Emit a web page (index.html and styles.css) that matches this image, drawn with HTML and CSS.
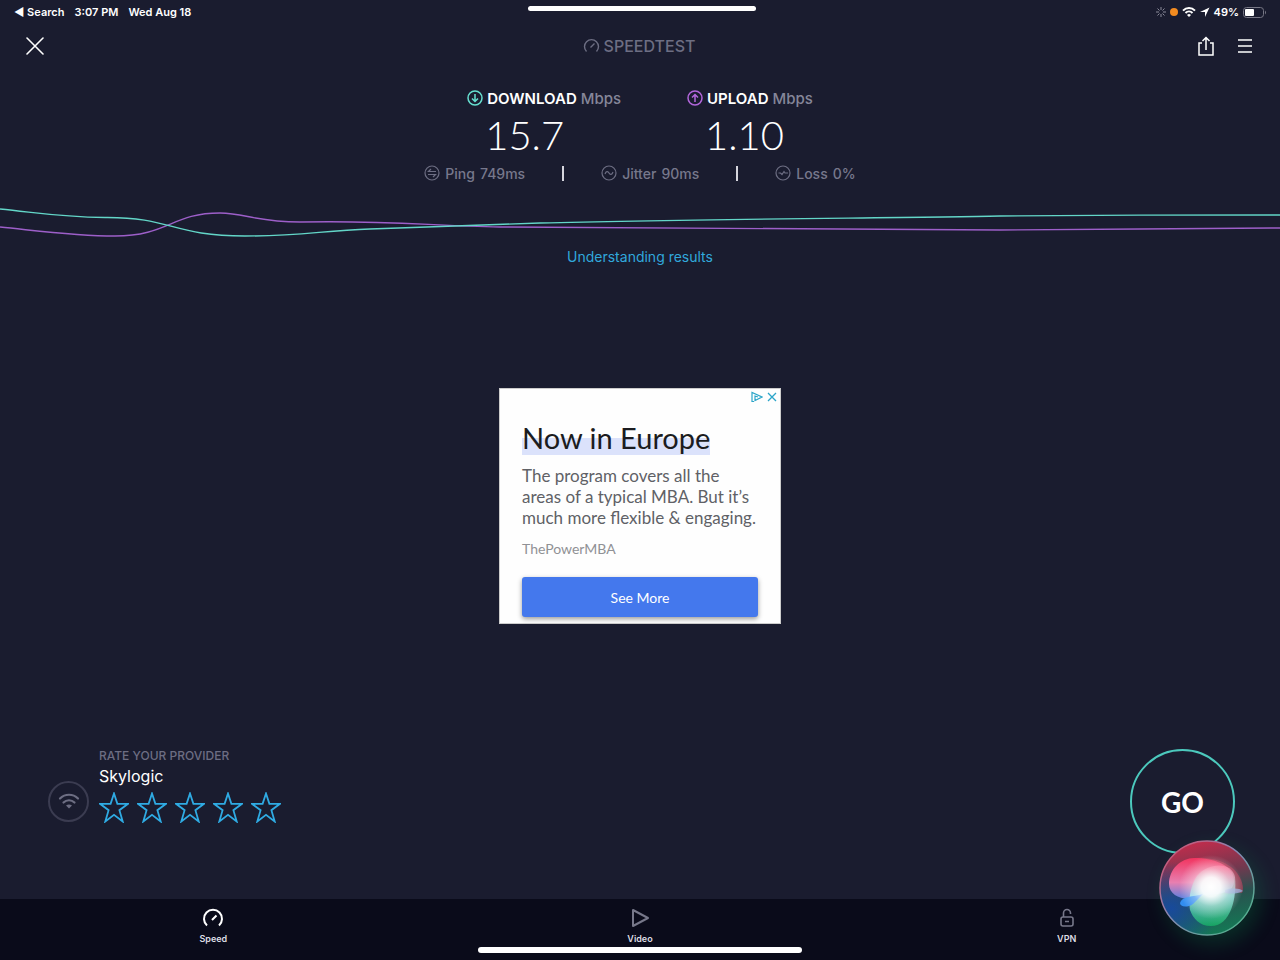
FILE: index.html
```html
<!DOCTYPE html>
<html lang="en">
<head>
    <meta charset="UTF-8">
    <meta name="viewport" content="width=device-width, initial-scale=1.0">
    <title>Speedtest</title>
    <link rel="stylesheet" href="styles.css">
</head>
<body>

    <div class="status-bar">
        <div class="status-left">
            <a href="#">◀ Search</a>
            <span>3:07 PM</span>
            <span>Wed Aug 18</span>
        </div>
        <div class="status-right">
            <svg width="10" height="10" viewBox="0 0 10 10" stroke="#8a8a9a" stroke-width="1">
                <path d="M5 0v3M5 7v3M0 5h3M7 5h3M1.5 1.5l2 2M6.5 6.5l2 2M8.500 1.500l-2 2M3.500 6.500l-2 2"/>
            </svg>
            <span class="mic-dot"></span>
            <svg width="14" height="10" viewBox="0 0 14 10" fill="none" stroke="#fff" stroke-width="2">
                <path d="M1 3.600a8.500 8.500 0 0 1 12 0M3.500 6a5 5 0 0 1 7 0"/>
                <path d="M7 10L5 8a3 3 0 0 1 4 0z" fill="#fff" stroke="none"/>
            </svg>
            <svg width="10" height="10" viewBox="0 0 10 10" fill="#fff">
                <path d="M9.500 .5L0 5h5v5z"/>
            </svg>
            <span class="percent">49%</span>
            <svg width="23" height="11" viewBox="0 0 23 11">
                <rect x=".5" y=".5" width="20" height="10" rx="3" fill="none" stroke="#777785"/>
                <rect x="2" y="2" width="9" height="7" rx="1" fill="#fff"/>
                <path d="M22 3.500q2 2 0 4z" fill="#777785"/>
            </svg>
        </div>
        <div class="grabber"></div>
    </div>

    <header class="header">
        <button class="icon-button" aria-label="Close">
            <svg width="18" height="18" viewBox="0 0 18 18" stroke="#fff" stroke-width="1.600" stroke-linecap="round">
                <path d="M1 1l16 16M17 1L1 17"/>
            </svg>
        </button>
        <div class="logo">
            <svg width="17" height="16" viewBox="0 0 17 16" fill="none" stroke="#6d6e83" stroke-width="1.400">
                <path d="M3.500 13.500a7 7 0 1 1 10 0M7.500 9.500l4-4"/>
            </svg>
            SPEEDTEST
        </div>
        <div class="header-actions">
            <button class="icon-button" aria-label="Share">
                <svg width="16" height="20" viewBox="0 0 16 20" fill="none" stroke="#fff" stroke-width="1.500">
                    <path d="M4 7H1v12h14V7h-3M8 14V1.500M4.500 5L8 1.500 11.500 5"/>
                </svg>
            </button>
            <button class="icon-button" aria-label="Menu">
                <svg width="14" height="14" viewBox="0 0 14 14" stroke="#fff" stroke-width="1.600">
                    <path d="M0 1h14M0 7h14M0 13h14"/>
                </svg>
            </button>
        </div>
    </header>

    <main class="main">
        <div class="results">
            <div class="result">
                <div class="result-label">
                    <svg width="16" height="16" viewBox="0 0 16 16" fill="none" stroke="#66dfd0" stroke-width="1.500">
                        <circle cx="8" cy="8" r="7"/>
                        <path d="M8 4v7.500M5 8.500l3 3 3-3"/>
                    </svg>
                    <b>DOWNLOAD</b> Mbps
                </div>
                <div class="result-value">15.7</div>
            </div>
            <div class="result">
                <div class="result-label">
                    <svg width="16" height="16" viewBox="0 0 16 16" fill="none" stroke="#b266db" stroke-width="1.500">
                        <circle cx="8" cy="8" r="7"/>
                        <path d="M8 12V4.500M5 7.500l3-3 3 3"/>
                    </svg>
                    <b>UPLOAD</b> Mbps
                </div>
                <div class="result-value">1.10</div>
            </div>
        </div>

        <div class="details">
            <div class="detail">
                <svg width="16" height="16" viewBox="0 0 16 16" fill="none" stroke="#6d6e83" stroke-width="1.200">
                    <circle cx="8" cy="8" r="7"/>
                    <path d="M12 6.500H4.500L7 4M4 9.500h7.500L9 12"/>
                </svg>
                <span>Ping</span> <span>749ms</span>
            </div>
            <div class="divider"></div>
            <div class="detail">
                <svg width="16" height="16" viewBox="0 0 16 16" fill="none" stroke="#6d6e83" stroke-width="1.200">
                    <circle cx="8" cy="8" r="7"/>
                    <path d="M4 9c1-3 3-3 4-1s3 2 4-1"/>
                </svg>
                <span>Jitter</span> <span>90ms</span>
            </div>
            <div class="divider"></div>
            <div class="detail">
                <svg width="16" height="16" viewBox="0 0 16 16" fill="none" stroke="#6d6e83" stroke-width="1.200">
                    <circle cx="8" cy="8" r="7"/>
                    <path d="M3.500 8h2l1.500 1.500L9 6.500l1 1.500h3"/>
                </svg>
                <span>Loss</span> <span>0%</span>
            </div>
        </div>

        <svg class="graph" viewBox="0 0 1280 40" preserveAspectRatio="none" fill="none" stroke-width="1.400">
            <path stroke="#9d5fc9" d="M0 27C40 31 75 36 115 36C168 36 172 13 220 13C245 13 255 22 300 22C390 20 430 26 500 27C700 29 850 30 1000 30C1100 30 1180 28 1280 28"/>
            <path stroke="#63d6c8" d="M0 9C40 13 60 17 105 17.500C172 17 172 36 245 36C300 36 320 31 370 29C430 27 480 25 540 23C700 19 900 18 1000 16C1100 15 1180 15 1280 15"/>
        </svg>

        <a class="understanding" href="#">Understanding results</a>

        <section class="ad">
            <div class="ad-icons">
                <svg width="12" height="12" viewBox="0 0 12 12" fill="none" stroke="#2ba5c9" stroke-width="1.200">
                    <path d="M3 10.500H1v-9L11 6 4 9.500V5l3 1"/>
                </svg>
                <button class="ad-close" aria-label="Close ad">
                    <svg width="10" height="10" viewBox="0 0 10 10" stroke="#2ba5c9" stroke-width="1.300">
                        <path d="M1 1l8 8M9 1L1 9"/>
                    </svg>
                </button>
            </div>
            <h2><span>Now in Europe</span></h2>
            <p>The program covers all the<br>areas of a typical MBA. But it’s<br>much more flexible &amp; engaging.</p>
            <div class="advertiser">ThePowerMBA</div>
            <button class="see-more">See More</button>
        </section>

        <div class="bottom">
            <div class="provider">
                <div class="provider-icon">
                    <svg width="22" height="17" viewBox="0 0 22 17" fill="none" stroke="#6d6e83" stroke-width="2.200" stroke-linecap="round">
                        <path d="M2 5.500c5-5 13-5 18 0M5.500 9.500c3-3 8-3 11 0"/>
                        <path d="M11 15.500l-3-3c2-1.500 4-1.500 6 0z" fill="#6d6e83" stroke="none"/>
                    </svg>
                </div>
                <div>
                    <div class="rate-title">RATE YOUR PROVIDER</div>
                    <div class="provider-name">Skylogic</div>
                    <div class="stars">
                        <button aria-label="1 star"><svg viewBox="0 0 30 30"><path d="M15 1l3.400 10.300H29l-8.600 6.400L23.700 29 15 22.300 6.300 29l3.300-11.300L1 11.300h10.600z"/></svg></button>
                        <button aria-label="2 stars"><svg viewBox="0 0 30 30"><path d="M15 1l3.400 10.300H29l-8.600 6.400L23.700 29 15 22.300 6.300 29l3.300-11.300L1 11.300h10.600z"/></svg></button>
                        <button aria-label="3 stars"><svg viewBox="0 0 30 30"><path d="M15 1l3.400 10.300H29l-8.600 6.400L23.700 29 15 22.300 6.300 29l3.300-11.300L1 11.300h10.600z"/></svg></button>
                        <button aria-label="4 stars"><svg viewBox="0 0 30 30"><path d="M15 1l3.400 10.300H29l-8.600 6.400L23.700 29 15 22.300 6.300 29l3.300-11.300L1 11.300h10.600z"/></svg></button>
                        <button aria-label="5 stars"><svg viewBox="0 0 30 30"><path d="M15 1l3.400 10.300H29l-8.600 6.400L23.700 29 15 22.300 6.300 29l3.300-11.300L1 11.300h10.600z"/></svg></button>
                    </div>
                </div>
            </div>
            <button class="go">GO</button>
        </div>
    </main>

    <nav class="tabs">
        <a class="tab" href="#">
            <svg width="22" height="20" viewBox="0 0 22 20" fill="none" stroke="#fff" stroke-width="2">
                <path d="M5 17.500a9 9 0 1 1 12 0M10 12l4.500-4.500"/>
            </svg>
            Speed
        </a>
        <a class="tab" href="#">
            <svg width="22" height="20" viewBox="0 0 22 20" fill="none" stroke="#77788a" stroke-width="2" stroke-linejoin="round">
                <path d="M4 2v16l15-8z"/>
            </svg>
            Video
        </a>
        <a class="tab" href="#">
            <svg width="22" height="20" viewBox="0 0 22 20" fill="none" stroke="#77788a" stroke-width="1.600">
                <rect x="5" y="9" width="12" height="9" rx="2"/>
                <path d="M7.500 9V5a3.500 3.500 0 0 1 7 0v1M9 13.500h4"/>
            </svg>
            VPN
        </a>
        <div class="home-bar"></div>
    </nav>

    <button class="siri" aria-label="Siri">
        <svg width="96" height="96" viewBox="0 0 96 96">
            <defs>
                <linearGradient id="orb" x1=".4" y1="0" x2=".6" y2="1">
                    <stop offset="0" stop-color="#c22c4c"/>
                    <stop offset=".35" stop-color="#73384f"/>
                    <stop offset=".6" stop-color="#29514f"/>
                    <stop offset="1" stop-color="#137a55"/>
                </linearGradient>
                <radialGradient id="blue" cx=".12" cy=".72" r=".5">
                    <stop offset="0" stop-color="#184a9c"/>
                    <stop offset="1" stop-color="#184a9c" stop-opacity="0"/>
                </radialGradient>
                <linearGradient id="pink" x1="0" y1="0" x2="0" y2="1">
                    <stop offset="0" stop-color="#f2345f"/>
                    <stop offset=".6" stop-color="#e87fb0"/>
                    <stop offset="1" stop-color="#5b7fe0"/>
                </linearGradient>
                <linearGradient id="green" x1="0" y1="0" x2="0" y2="1">
                    <stop offset="0" stop-color="#ff6f95"/>
                    <stop offset=".5" stop-color="#8eece8"/>
                    <stop offset="1" stop-color="#16b567"/>
                </linearGradient>
                <linearGradient id="rim" x1="0" y1="0" x2="1" y2="1">
                    <stop offset="0" stop-color="#e04763"/>
                    <stop offset=".45" stop-color="#8688b4"/>
                    <stop offset="1" stop-color="#44bc83"/>
                </linearGradient>
                <radialGradient id="shine">
                    <stop offset="0" stop-color="#fff"/>
                    <stop offset=".3" stop-color="#fff" stop-opacity=".9"/>
                    <stop offset=".6" stop-color="#fff" stop-opacity=".35"/>
                    <stop offset="1" stop-color="#fff" stop-opacity="0"/>
                </radialGradient>
            </defs>
            <circle cx="48" cy="48" r="47" fill="url(#orb)"/>
            <circle cx="48" cy="48" r="47" fill="url(#blue)"/>
            <path d="M28 19C48 15 72 21 80 36C84 43 85 49 83 53L50 47z" fill="#d93a5c" opacity=".5"/>
            <path d="M10 44C10 30 21 18 36 18C52 18 76 24 75 42C74 55 56 54 44 55C30 63 10 58 10 44z" fill="url(#pink)"/>
            <path d="M38 36C50 22 73 22 76 37C78 57 72 86 52 86C40 86 34 78 31 70C29 58 32 45 38 36z" fill="url(#green)" opacity=".75"/>
            <path d="M21 63C23 56 34 57 44 54L34 64C28 68 21 67 21 63z" fill="#328df0"/>
            <path d="M66 50c8-2 14-2 18 1-5 3-12 3-18 2z" fill="#91a4d4" opacity=".8"/>
            <circle cx="52" cy="47" r="32" fill="url(#shine)"/>
            <circle cx="48" cy="48" r="47" fill="none" stroke="url(#rim)" stroke-width="1.500"/>
        </svg>
    </button>

</body>
</html>
```
FILE: styles.css
```css
* {
    box-sizing: border-box;
}
body {
    margin: 0;
    min-height: 100vh;
    display: flex;
    flex-direction: column;
    position: relative;
    background-color: #1a1c2f;
    color: #fff;
    font-family: Inter, "Open Sans", sans-serif;
}
button {
    padding: 0;
    border: none;
    background: none;
    color: inherit;
    font-family: inherit;
    cursor: pointer;
}
a {
    color: inherit;
    text-decoration: none;
}
svg {
    display: block;
    flex-shrink: 0;
}

/* Status bar */
.status-bar {
    position: relative;
    display: flex;
    justify-content: space-between;
    align-items: center;
    height: 24px;
    padding: 0 14px;
    font-size: 11px;
    font-weight: 600;
}
.status-left {
    display: flex;
    gap: 10px;
}
.status-right {
    display: flex;
    align-items: center;
    gap: 4px;
}
.mic-dot {
    width: 8px;
    height: 8px;
    border-radius: 50%;
    background-color: #f38b20;
}
.grabber {
    position: absolute;
    top: 6px;
    left: 50%;
    width: 228px;
    height: 5px;
    margin-left: -112px;
    border-radius: 3px;
    background-color: #fff;
}

/* Header */
.header {
    display: grid;
    grid-template-columns: 1fr auto 1fr;
    align-items: center;
    height: 44px;
    padding: 0 28px 0 26px;
}
.header .icon-button {
    display: flex;
    justify-self: start;
}
.logo {
    display: flex;
    align-items: center;
    gap: 4px;
    color: #6d6e83;
    font-size: 16px;
    font-weight: 500;
}
.header-actions {
    display: flex;
    align-items: center;
    justify-self: end;
    gap: 24px;
}

/* Results */
.main {
    flex: 1;
    display: flex;
    flex-direction: column;
    align-items: center;
    padding-top: 20px;
}
.results {
    display: flex;
    gap: 66px;
}
.result-label {
    display: flex;
    align-items: center;
    gap: 4px;
    height: 20px;
    color: #858699;
    font-size: 15px;
    font-weight: 500;
}
.result-label b {
    color: #fff;
    font-weight: 600;
}
.result-value {
    height: 54px;
    padding-left: 18px;
    font-family: Lato, sans-serif;
    font-size: 40px;
    font-weight: 300;
    line-height: 54px;
}
.details {
    display: flex;
    align-items: center;
    gap: 37px;
    height: 22px;
    color: #77788c;
    font-size: 14px;
    font-weight: 500;
}
.detail {
    display: flex;
    align-items: center;
    gap: 5px;
}
.divider {
    width: 2px;
    height: 15px;
    background-color: #d5d5dd;
}
.graph {
    width: 100%;
    height: 40px;
    margin-top: 16px;
}
.understanding {
    margin-top: 8px;
    color: #31a8dc;
    font-size: 14px;
    line-height: 18px;
}

/* Ad */
.ad {
    width: 282px;
    margin-top: 122px;
    padding: 2px 22px 6px;
    border: 1px solid #ccc;
    background-color: #fefefe;
    color: #606166;
    font-family: Lato, sans-serif;
}
.ad-icons {
    display: flex;
    justify-content: flex-end;
    align-items: center;
    gap: 4px;
    height: 12px;
    margin-right: -19px;
}
.ad-close {
    display: flex;
}
.ad h2 {
    margin: 18px 0 10px;
    color: #1b1c20;
    font-size: 29px;
    font-weight: 400;
    line-height: 34px;
}
.ad h2 span {
    display: inline-block;
    background: linear-gradient(transparent 50%, #dbe2fb 50%);
}
.ad p {
    margin: 0;
    font-size: 17px;
    line-height: 21px;
    white-space: nowrap;
}
.advertiser {
    margin: 12px 0 19px;
    color: #909195;
    font-size: 14px;
    line-height: 18px;
}
.see-more {
    width: 100%;
    height: 40px;
    border-radius: 3px;
    background-color: #4478ed;
    box-shadow: 0 2px 5px rgba(0, 0, 0, 0.4);
    color: #fff;
    font-size: 14px;
}

/* Provider and go */
.bottom {
    display: flex;
    justify-content: space-between;
    align-items: flex-start;
    width: 100%;
    margin-top: auto;
    padding: 0 45px 45px 48px;
}
.provider {
    display: flex;
    align-items: flex-end;
    gap: 10px;
}
.provider-icon {
    display: flex;
    justify-content: center;
    align-items: center;
    width: 41px;
    height: 41px;
    margin-bottom: 1px;
    border: 2px solid #3b3c51;
    border-radius: 50%;
}
.rate-title {
    color: #6d6e83;
    font-size: 12px;
    font-weight: 500;
    line-height: 14px;
}
.provider-name {
    font-size: 16px;
    line-height: 26px;
}
.stars {
    display: flex;
    gap: 8px;
    padding-top: 3px;
}
.stars svg {
    width: 30px;
    height: 31px;
    fill: none;
    stroke: #2fabe3;
    stroke-width: 1.8;
}
.go {
    width: 105px;
    height: 105px;
    border: 2px solid #4cc9bd;
    border-radius: 50%;
    font-family: Lato, sans-serif;
    font-size: 28px;
    font-weight: 700;
}

/* Tabs */
.tabs {
    position: relative;
    display: flex;
    height: 61px;
    padding-top: 9px;
    background-color: #0a0b1a;
}
.tab {
    flex: 1;
    display: flex;
    flex-direction: column;
    align-items: center;
    gap: 5px;
    color: #dddde4;
    font-size: 9px;
    font-weight: 600;
    line-height: 12px;
}
.home-bar {
    position: absolute;
    bottom: 7px;
    left: 50%;
    width: 324px;
    height: 6px;
    margin-left: -162px;
    border-radius: 3px;
    background-color: #fff;
}

.siri {
    position: absolute;
    right: 25px;
    bottom: 24px;
    border-radius: 50%;
    box-shadow: 6px 8px 20px rgba(10, 180, 90, 0.2);
}
```
